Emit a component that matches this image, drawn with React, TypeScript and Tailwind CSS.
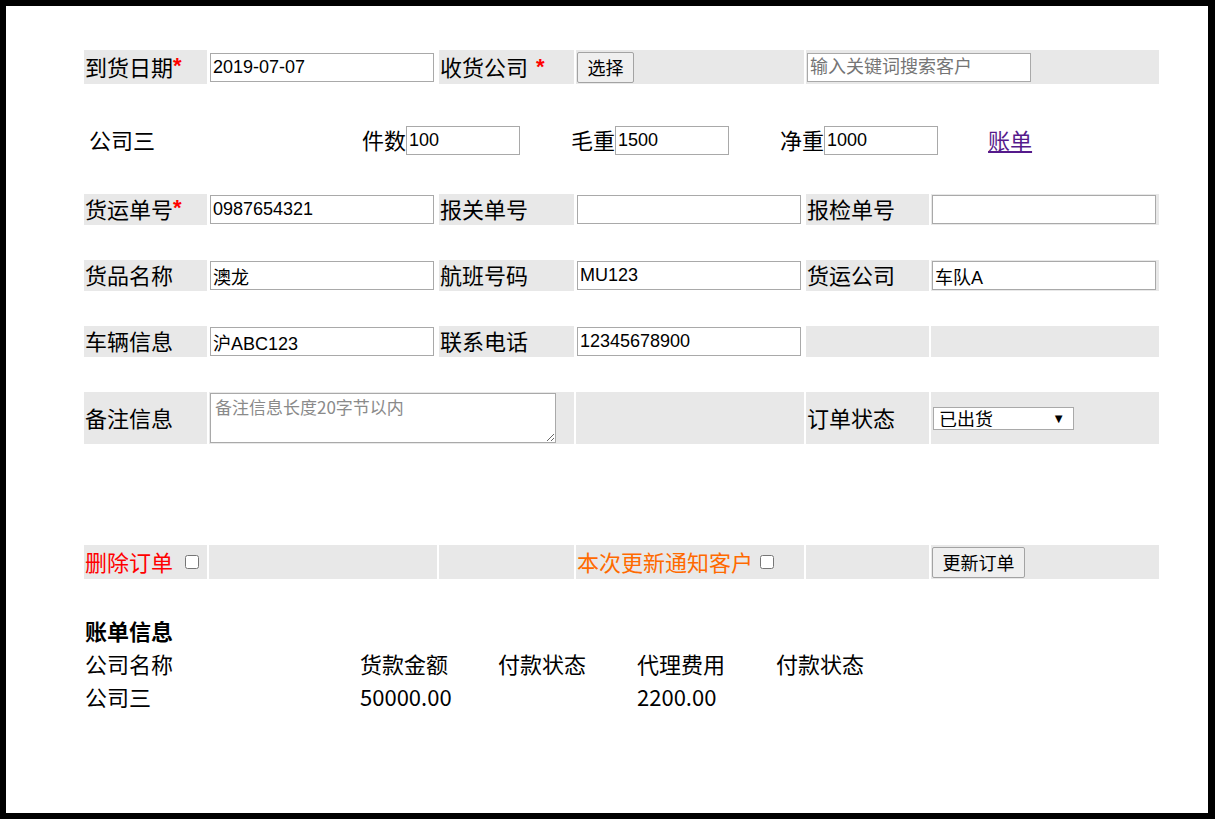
import React from "react";

const GRID = "grid grid-cols-[123px_228px_135px_228px_123px_228px] gap-x-[2px]";
const GRAY = "bg-[#e8e8e8]";
const CJK = "font-['Noto_Sans_CJK_SC',sans-serif]";
const LABEL = `${GRAY} ${CJK} flex items-center px-[1px] pb-[3px] text-[22px] leading-none`;
const CELL = "flex items-center px-[1px]";
const INPUT =
  "h-[29px] border border-[#a9a9a9] bg-white px-[2px] text-[18px] text-black outline-none placeholder:text-[#757575] font-['Liberation_Sans','Noto_Sans_CJK_SC',sans-serif]";
const BUTTON =
  "h-[31px] rounded-[2px] border border-[#a3a3a3] bg-[#efefef] px-[9px] text-[18px] leading-none text-black font-['Noto_Sans_CJK_SC',sans-serif]";

function Field({ value = "", placeholder, width = "w-[224px]" }: { value?: string; placeholder?: string; width?: string }) {
  return <input className={`${INPUT} ${width}`} defaultValue={value} placeholder={placeholder} />;
}

function Star() {
  return <span className="font-['Liberation_Sans',sans-serif] font-bold text-[#ff0000]">*</span>;
}

export default function App() {
  return (
    <div className="h-[819px] w-[1215px] bg-black pb-[6px] pl-[6px] pr-[7px] pt-[6px]">
      <div className="h-full bg-white pl-[78px] pt-[44px] text-black">
        {/* 第一行 */}
        <div className={`${GRID} h-[34px]`}>
          <div className={LABEL}>
            到货日期
            <Star />
          </div>
          <div className={CELL}>
            <Field value="2019-07-07" />
          </div>
          <div className={LABEL}>
            收货公司
            <span className="ml-[8px]">
              <Star />
            </span>
          </div>
          <div className={`${GRAY} ${CELL}`}>
            <button className={`${BUTTON} w-[57px]`}>选择</button>
          </div>
          <div className={`${GRAY} ${CELL} col-span-2`}>
            <Field placeholder="输入关键词搜索客户" />
          </div>
        </div>

        {/* 件数 / 毛重 / 净重 */}
        <div className={`${CJK} mt-[42px] flex h-[29px] items-center text-[22px] leading-none`}>
          <span className="w-[278px] pb-[3px] pl-[5px]">公司三</span>
          <span className="pb-[3px]">件数</span>
          <Field value="100" width="w-[114px]" />
          <span className="ml-[51px] pb-[3px]">毛重</span>
          <Field value="1500" width="w-[114px]" />
          <span className="ml-[51px] pb-[3px]">净重</span>
          <Field value="1000" width="w-[114px]" />
          <a href="#" className="ml-[50px] pb-[3px] text-[#551a8b] underline">
            账单
          </a>
        </div>

        <div className={`${GRID} mt-[39px] h-[31px]`}>
          <div className={LABEL}>
            货运单号
            <Star />
          </div>
          <div className={CELL}>
            <Field value="0987654321" />
          </div>
          <div className={LABEL}>报关单号</div>
          <div className={CELL}>
            <Field />
          </div>
          <div className={LABEL}>报检单号</div>
          <div className={`${GRAY} ${CELL}`}>
            <Field />
          </div>
        </div>

        <div className={`${GRID} mt-[35px] h-[31px]`}>
          <div className={LABEL}>货品名称</div>
          <div className={CELL}>
            <Field value="澳龙" />
          </div>
          <div className={LABEL}>航班号码</div>
          <div className={CELL}>
            <Field value="MU123" />
          </div>
          <div className={LABEL}>货运公司</div>
          <div className={`${GRAY} ${CELL}`}>
            <Field value="车队A" />
          </div>
        </div>

        <div className={`${GRID} mt-[35px] h-[31px]`}>
          <div className={LABEL}>车辆信息</div>
          <div className={CELL}>
            <Field value="沪ABC123" />
          </div>
          <div className={LABEL}>联系电话</div>
          <div className={CELL}>
            <Field value="12345678900" />
          </div>
          <div className={GRAY} />
          <div className={GRAY} />
        </div>

        <div className={`${GRID} mt-[35px] h-[52px]`}>
          <div className={LABEL}>备注信息</div>
          <div className={`${GRAY} ${CELL} col-span-2`}>
            <textarea
              className={`${CJK} h-[50px] w-[346px] border border-[#a9a9a9] bg-white px-[4px] py-[2px] text-[17px] leading-[22px] text-black outline-none placeholder:text-[#8a8a8a]`}
              placeholder="备注信息长度20字节以内"
            />
          </div>
          <div className={GRAY} />
          <div className={LABEL}>订单状态</div>
          <div className={`${GRAY} ${CELL}`}>
            <div className="relative ml-[1px] h-[23px] w-[141px] border border-[#a9a9a9] bg-white">
              <select
                className={`${CJK} h-full w-full appearance-none bg-transparent pl-[5px] text-[18px] leading-none text-black outline-none`}
                defaultValue="已出货"
              >
                <option>已出货</option>
                <option>未出货</option>
              </select>
              <span className="pointer-events-none absolute right-[8px] top-[4px] text-[13px] leading-none text-black">▼</span>
            </div>
          </div>
        </div>

        <div className={`${GRID} mt-[101px] h-[34px]`}>
          <div className={`${LABEL} text-[#ff0000]`}>
            删除订单
            <input type="checkbox" className="ml-[12px] mt-[2px] h-[14px] w-[14px]" />
          </div>
          <div className={GRAY} />
          <div className={GRAY} />
          <div className={`${LABEL} text-[#ff6a00]`}>
            本次更新通知客户
            <input type="checkbox" className="ml-[7px] mt-[2px] h-[14px] w-[14px]" />
          </div>
          <div className={GRAY} />
          <div className={`${GRAY} ${CELL}`}>
            <button className={`${BUTTON} w-[93px]`}>更新订单</button>
          </div>
        </div>

        {/* 账单信息 */}
        <div className={`${CJK} mt-[35px] pl-[1px] text-[22px] leading-[33px]`}>
          <div className="font-bold">账单信息</div>
          <div className="grid grid-cols-[275px_138px_139px_139px_auto]">
            <span>公司名称</span>
            <span>货款金额</span>
            <span>付款状态</span>
            <span>代理费用</span>
            <span>付款状态</span>
            <span>公司三</span>
            <span>50000.00</span>
            <span />
            <span>2200.00</span>
            <span />
          </div>
        </div>
      </div>
    </div>
  );
}
